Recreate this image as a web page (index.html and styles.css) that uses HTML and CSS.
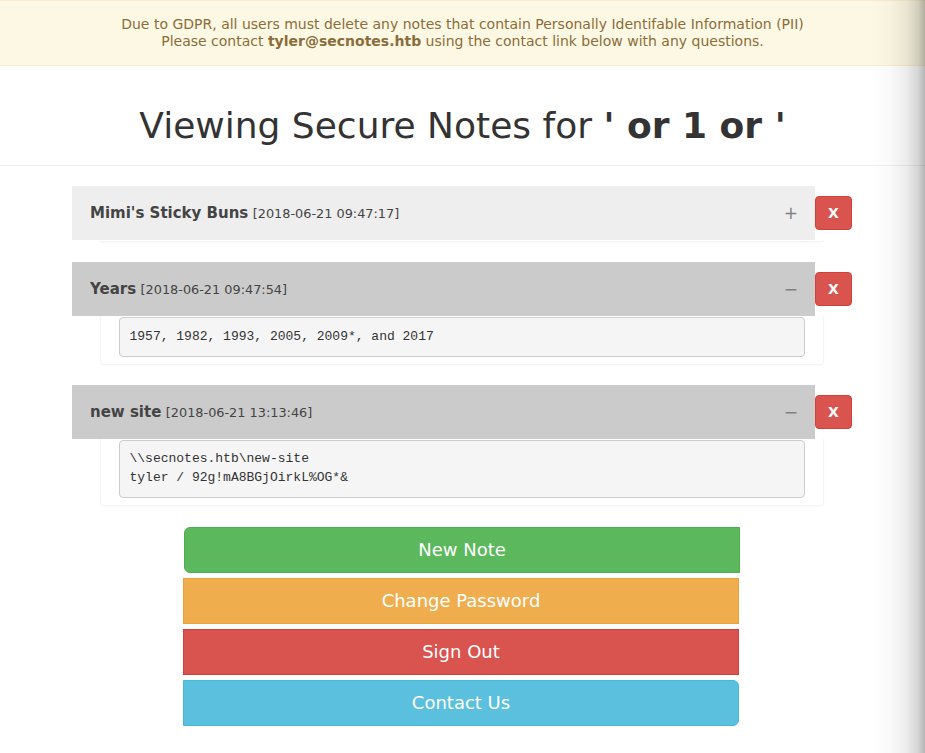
FILE: index.html
```html
<!DOCTYPE html>
<html>
<head>
<meta charset="utf-8">
<title>Secure Notes</title>
<link rel="stylesheet" href="styles.css">
</head>
<body>
<div class="alert">
  Due to GDPR, all users must delete any notes that contain Personally Identifable Information (PII)<br>
  Please contact <strong>tyler@secnotes.htb</strong> using the contact link below with any questions.
</div>
<div class="page-header">
  <h1>Viewing Secure Notes for <strong>' or 1 or '</strong></h1>
</div>
<div class="notes">
  <div class="note">
    <div class="note-top">
      <div class="note-heading light">
        <span class="note-title"><b>Mimi's Sticky Buns</b> <small>[2018-06-21 09:47:17]</small></span>
        <span class="toggle">+</span>
      </div>
      <button class="btn-del">X</button>
    </div>
    <div class="note-body collapsed"></div>
  </div>
  <div class="note">
    <div class="note-top">
      <div class="note-heading">
        <span class="note-title"><b>Years</b> <small>[2018-06-21 09:47:54]</small></span>
        <span class="toggle">&minus;</span>
      </div>
      <button class="btn-del">X</button>
    </div>
    <div class="note-body"><pre>1957, 1982, 1993, 2005, 2009*, and 2017</pre></div>
  </div>
  <div class="note">
    <div class="note-top">
      <div class="note-heading">
        <span class="note-title"><b>new site</b> <small>[2018-06-21 13:13:46]</small></span>
        <span class="toggle">&minus;</span>
      </div>
      <button class="btn-del">X</button>
    </div>
    <div class="note-body"><pre>\\secnotes.htb\new-site
tyler / 92g!mA8BGjOirkL%OG*&amp;</pre></div>
  </div>
</div>
<div class="actions">
  <a class="btn btn-green">New Note</a>
  <a class="btn btn-orange">Change Password</a>
  <a class="btn btn-red">Sign Out</a>
  <a class="btn btn-blue">Contact Us</a>
</div>
<div class="edge-shadow"></div>
</body>
</html>
```
FILE: styles.css
```css
html, body {
  margin: 0;
  padding: 0;
  background: #fff;
}
body {
  font-family: "DejaVu Sans", sans-serif;
  font-size: 14px;
  color: #333;
  min-height: 753px;
}
.alert {
  background: #fcf8e3;
  border-top: 1px solid #faebcc;
  border-bottom: 1px solid #faebcc;
  color: #8a6d3b;
  text-align: center;
  padding: 15px 15px;
  line-height: 17px;
}
.alert strong {
  font-weight: bold;
}
.page-header {
  border-bottom: 1px solid #eee;
  padding: 40px 0 19px;
  text-align: center;
}
.page-header h1 {
  margin: 0;
  font-size: 36px;
  line-height: 40px;
  font-weight: normal;
  color: #333;
}
.notes {
  width: 781px;
  margin: 20px auto 0;
}
.note {
  margin-bottom: 20px;
}
.note-top {
  display: flex;
  align-items: center;
}
.note-heading {
  width: 743px;
  height: 54px;
  box-sizing: border-box;
  padding: 0 18px;
  background: #cbcbcb;
  display: flex;
  align-items: center;
  justify-content: space-between;
  color: #444;
}
.note-heading.light {
  background: #eee;
}
.note-title b {
  font-size: 15px;
  font-weight: bold;
}
.note-title small {
  font-size: 12.85px;
}
.toggle {
  color: #808080;
  font-size: 17px;
  margin-right: -1px;
}
.btn-del {
  width: 37px;
  height: 34px;
  padding: 0;
  background: #d9534f;
  border: 1px solid #d43f3a;
  border-radius: 4px;
  color: #fff;
  font-family: "DejaVu Sans", sans-serif;
  font-weight: bold;
  font-size: 14px;
}
.note-body {
  margin-left: 28px;
  width: 724px;
  box-sizing: border-box;
  padding: 1px 18px 0 18px;
  border: 1px solid #f4f4f4;
  border-top: none;
  border-radius: 0 0 4px 4px;
  box-shadow: 0 1px 2px rgba(0, 0, 0, 0.03);
}
.note-body.collapsed {
  height: 2px;
  padding: 0;
}
pre {
  margin: 0 0 7px;
  padding: 9.5px;
  background: #f5f5f5;
  border: 1px solid #ccc;
  border-radius: 4px;
  font-family: "Liberation Mono", monospace;
  font-size: 13px;
  line-height: 18.57px;
  color: #333;
}
.actions {
  width: 559px;
  margin: 0 auto;
  padding-top: 1px;
  display: flex;
  flex-direction: column;
  gap: 5px;
}
.btn {
  display: block;
  box-sizing: border-box;
  width: 556px;
  height: 46px;
  padding: 10px 16px;
  font-size: 18px;
  line-height: 24px;
  text-align: center;
  color: #fff;
  border: 1px solid transparent;
}
.btn-green {
  background: #5cb85c;
  border-color: #4cae4c;
  border-radius: 6px 0 0 6px;
  margin-left: 1px;
}
.btn-orange {
  background: #f0ad4e;
  border-color: #eea236;
}
.btn-red {
  background: #d9534f;
  border-color: #d43f3a;
}
.btn-blue {
  background: #5bc0de;
  border-color: #46b8da;
  border-radius: 0 6px 6px 0;
}
.edge-shadow {
  position: fixed;
  top: 0;
  right: 0;
  width: 55px;
  height: 100%;
  pointer-events: none;
  background: linear-gradient(to right, rgba(0,0,0,0) 0%, rgba(0,0,0,0.02) 35%, rgba(0,0,0,0.07) 65%, rgba(0,0,0,0.17) 88%, rgba(0,0,0,0.3) 100%);
}
```
